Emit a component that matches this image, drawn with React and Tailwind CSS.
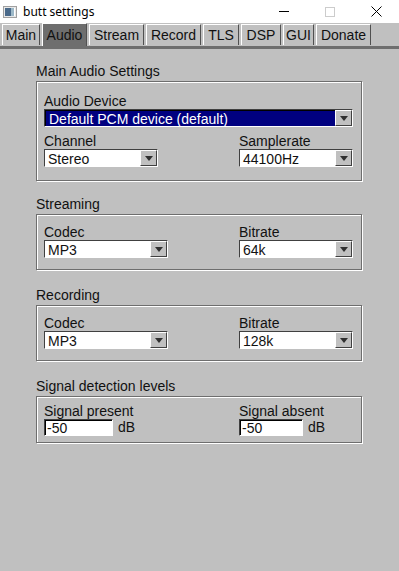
const TABS = [
  { label: 'Main', w: 38 },
  { label: 'Audio', w: 45, active: true },
  { label: 'Stream', w: 55 },
  { label: 'Record', w: 55 },
  { label: 'TLS', w: 36 },
  { label: 'DSP', w: 40 },
  { label: 'GUI', w: 31 },
  { label: 'Donate', w: 55 },
]

function Arrow() {
  return (
    <div className="w-[17px] h-full bg-[#c0c0c0] border border-t-white border-l-white border-r-[#404040] border-b-[#404040] flex items-center justify-center shrink-0">
      <svg width="8" height="5" viewBox="0 0 8 5">
        <polygon points="0,0 8,0 4,5" fill="#303030" />
      </svg>
    </div>
  )
}

function Dropdown({ value, width, selected }) {
  return (
    <div
      className={`h-[18px] flex border border-t-[#404040] border-l-[#404040] border-r-white border-b-white shadow-[inset_1px_1px_0_#000] ${width}`}
    >
      <div className={`flex-1 flex items-center pl-[3px] pt-px leading-none ${selected ? 'bg-[#000080] text-white ml-px mt-px' : 'bg-white'}`}>
        {value}
      </div>
      <Arrow />
    </div>
  )
}

function Field({ value, width }) {
  return (
    <div className={`h-[17px] bg-white flex items-center pl-[2px] leading-none border border-t-[#404040] border-l-[#404040] border-r-white border-b-white shadow-[inset_1px_1px_0_#000] ${width}`}>
      {value}
    </div>
  )
}

function Group({ title, children, className, outer }) {
  return (
    <div className={outer}>
      <div className="h-[16px] leading-[16px]">{title}</div>
      <div className={`mt-[2px] border border-[#6e6e6e] shadow-[1px_1px_0_#fff,inset_1px_1px_0_#fff] ${className}`}>
        {children}
      </div>
    </div>
  )
}

function Label({ children }) {
  return <div className="h-[16px] leading-[16px]">{children}</div>
}

export default function App() {
  return (
    <div className="w-[399px] h-[571px] bg-[#c0c0c0] text-[14px] text-[#111] font-['Liberation_Sans',Arial,sans-serif] overflow-hidden">
      {/* Title bar */}
      <div className="h-[23px] bg-white flex items-center relative">
        <svg className="ml-[3px]" width="14" height="12" viewBox="0 0 14 12">
          <rect x="0.5" y="0.5" width="13" height="11" fill="#e8e8e8" stroke="#a0a0a0" />
          <rect x="2" y="2" width="6" height="8" fill="#4a6a8a" />
          <rect x="8" y="2" width="3" height="8" fill="#9cb8c8" />
          <rect x="11" y="2" width="1" height="8" fill="#ffffff" />
        </svg>
        <span className="ml-[6px] text-[12px] font-['Noto_Sans',sans-serif] text-black leading-none">butt settings</span>
        <div className="ml-auto flex items-center h-full">
          <div className="w-[46px] h-full flex items-center justify-center">
            <div className="w-[10px] h-px bg-black" />
          </div>
          <div className="w-[46px] h-full flex items-center justify-center">
            <div className="w-[10px] h-[10px] border border-[#cccccc]" />
          </div>
          <div className="w-[46px] h-full flex items-center justify-center">
            <svg width="11" height="11" viewBox="0 0 11 11">
              <path d="M0.5 0.5 L10.5 10.5 M10.5 0.5 L0.5 10.5" stroke="#000" strokeWidth="1" />
            </svg>
          </div>
        </div>
      </div>

      {/* Tabs */}
      <div className="h-[23px] flex items-end gap-[2px] pl-[2px]">
        {TABS.map((t) => (
          <div
            key={t.label}
            style={{ width: t.w }}
            className={`flex items-center justify-center border-t border-l border-r border-t-white border-l-white border-r-[#505050] ${
              t.active ? 'h-[23px] bg-[#6e6e6e]' : 'h-[21px] bg-[#c0c0c0] mb-[1px]'
            }`}
          >
            {t.label}
          </div>
        ))}
      </div>
      <div className="h-[3px] bg-[#6e6e6e]" />

      {/* Content */}
      <div className="pl-[36px] pr-[37px] pt-[14px] flex flex-col">
        <Group title="Main Audio Settings" className="pt-[11px] pb-[13px] pl-[7px] pr-[8px]">
          <Label>Audio Device</Label>
          <Dropdown value="Default PCM device (default)" width="w-full" selected />
          <div className="flex mt-[6px]">
            <div className="w-[195px]">
              <Label>Channel</Label>
              <Dropdown value="Stereo" width="w-[114px]" />
            </div>
            <div className="flex-1">
              <Label>Samplerate</Label>
              <Dropdown value="44100Hz" width="w-full" />
            </div>
          </div>
        </Group>

        <Group title="Streaming" outer="mt-[15px]" className="pt-[9px] pb-[11px] pl-[7px] pr-[8px]">
          <div className="flex">
            <div className="w-[195px]">
              <Label>Codec</Label>
              <Dropdown value="MP3" width="w-[124px]" />
            </div>
            <div className="flex-1">
              <Label>Bitrate</Label>
              <Dropdown value="64k" width="w-full" />
            </div>
          </div>
        </Group>

        <Group title="Recording" outer="mt-[17px]" className="pt-[9px] pb-[11px] pl-[7px] pr-[8px]">
          <div className="flex">
            <div className="w-[195px]">
              <Label>Codec</Label>
              <Dropdown value="MP3" width="w-[124px]" />
            </div>
            <div className="flex-1">
              <Label>Bitrate</Label>
              <Dropdown value="128k" width="w-full" />
            </div>
          </div>
        </Group>

        <Group title="Signal detection levels" outer="mt-[17px]" className="pt-[6px] pb-[6px] pl-[7px] pr-[8px]">
          <div className="flex">
            <div className="w-[195px]">
              <Label>Signal present</Label>
              <div className="flex items-center gap-[5px] h-[17px]">
                <Field value="-50" width="w-[69px]" />
                <span>dB</span>
              </div>
            </div>
            <div className="flex-1">
              <Label>Signal absent</Label>
              <div className="flex items-center gap-[5px] h-[17px]">
                <Field value="-50" width="w-[64px]" />
                <span>dB</span>
              </div>
            </div>
          </div>
        </Group>
      </div>
    </div>
  )
}
